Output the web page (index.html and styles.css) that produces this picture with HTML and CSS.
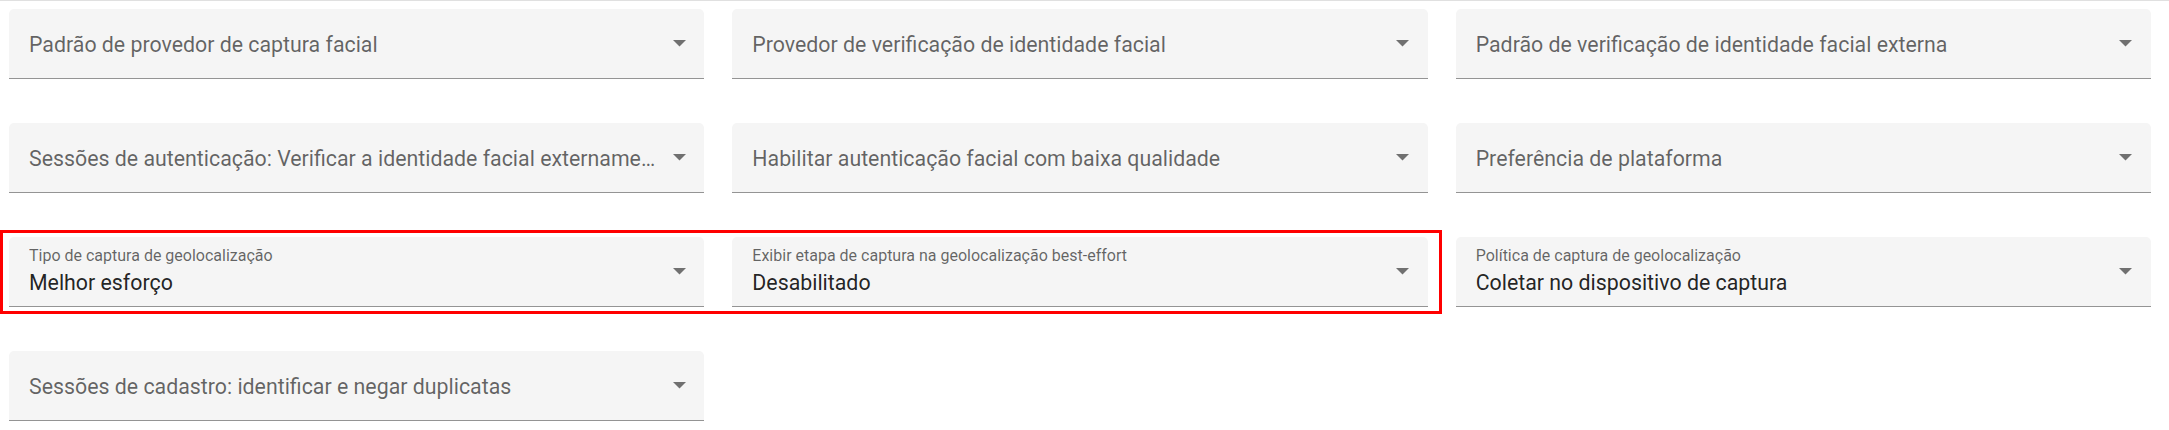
FILE: index.html
```html
<!DOCTYPE html>
<html lang="pt-BR">
<head>
<meta charset="utf-8">
<title>Configurações de captura facial</title>
<link rel="stylesheet" href="styles.css">
</head>
<body>
<div class="page">
  <div class="topline"></div>
  <div class="grid">
    <div class="field">
      <div class="field-text"><div class="placeholder">Padrão de provedor de captura facial</div></div>
      <div class="arrow"><svg width="13" height="7" viewBox="0 0 13 7"><path d="M0 0h13L6.5 6.5z"/></svg></div>
    </div>
    <div class="field">
      <div class="field-text"><div class="placeholder">Provedor de verificação de identidade facial</div></div>
      <div class="arrow"><svg width="13" height="7" viewBox="0 0 13 7"><path d="M0 0h13L6.5 6.5z"/></svg></div>
    </div>
    <div class="field">
      <div class="field-text"><div class="placeholder">Padrão de verificação de identidade facial externa</div></div>
      <div class="arrow"><svg width="13" height="7" viewBox="0 0 13 7"><path d="M0 0h13L6.5 6.5z"/></svg></div>
    </div>

    <div class="field">
      <div class="field-text"><div class="placeholder">Sessões de autenticação: Verificar a identidade facial externamente</div></div>
      <div class="arrow"><svg width="13" height="7" viewBox="0 0 13 7"><path d="M0 0h13L6.5 6.5z"/></svg></div>
    </div>
    <div class="field">
      <div class="field-text"><div class="placeholder">Habilitar autenticação facial com baixa qualidade</div></div>
      <div class="arrow"><svg width="13" height="7" viewBox="0 0 13 7"><path d="M0 0h13L6.5 6.5z"/></svg></div>
    </div>
    <div class="field">
      <div class="field-text"><div class="placeholder">Preferência de plataforma</div></div>
      <div class="arrow"><svg width="13" height="7" viewBox="0 0 13 7"><path d="M0 0h13L6.5 6.5z"/></svg></div>
    </div>

    <div class="field">
      <div class="field-text">
        <div class="label">Tipo de captura de geolocalização</div>
        <div class="value">Melhor esforço</div>
      </div>
      <div class="arrow"><svg width="13" height="7" viewBox="0 0 13 7"><path d="M0 0h13L6.5 6.5z"/></svg></div>
    </div>
    <div class="field">
      <div class="field-text">
        <div class="label">Exibir etapa de captura na geolocalização best-effort</div>
        <div class="value">Desabilitado</div>
      </div>
      <div class="arrow"><svg width="13" height="7" viewBox="0 0 13 7"><path d="M0 0h13L6.5 6.5z"/></svg></div>
    </div>
    <div class="field">
      <div class="field-text">
        <div class="label">Política de captura de geolocalização</div>
        <div class="value">Coletar no dispositivo de captura</div>
      </div>
      <div class="arrow"><svg width="13" height="7" viewBox="0 0 13 7"><path d="M0 0h13L6.5 6.5z"/></svg></div>
    </div>

    <div class="field">
      <div class="field-text"><div class="placeholder">Sessões de cadastro: identificar e negar duplicatas</div></div>
      <div class="arrow"><svg width="13" height="7" viewBox="0 0 13 7"><path d="M0 0h13L6.5 6.5z"/></svg></div>
    </div>
  </div>
  <div class="highlight"></div>
</div>
</body>
</html>
```
FILE: styles.css
```css
html, body {
  margin: 0;
  padding: 0;
  background: #ffffff;
}

body {
  font-family: Roboto, "Liberation Sans", Arial, sans-serif;
  -webkit-font-smoothing: antialiased;
}

.page {
  position: relative;
  height: 430px;
  overflow: hidden;
}

.topline {
  height: 1px;
  background: #e0e0e0;
}

.grid {
  display: grid;
  grid-template-columns: repeat(3, 1fr);
  column-gap: 28px;
  row-gap: 44px;
  padding: 8px 18px 0 9px;
}

.field {
  display: flex;
  align-items: flex-start;
  height: 69px;
  padding: 0 12px 0 20px;
  background: #f5f5f5;
  border-bottom: 1px solid #949494;
  border-radius: 5px 5px 0 0;
  min-width: 0;
}

.field-text {
  flex: 1;
  min-width: 0;
}

.placeholder {
  padding-top: 24px;
  font-size: 21.33px;
  line-height: 24px;
  color: rgba(0, 0, 0, 0.6);
  white-space: nowrap;
  overflow: hidden;
  text-overflow: ellipsis;
}

.label {
  padding-top: 11px;
  font-size: 16px;
  line-height: 16px;
  color: rgba(0, 0, 0, 0.6);
  white-space: nowrap;
  overflow: hidden;
  text-overflow: ellipsis;
}

.value {
  margin-top: 7px;
  font-size: 21.33px;
  line-height: 24px;
  color: rgba(0, 0, 0, 0.87);
  white-space: nowrap;
  overflow: hidden;
  text-overflow: ellipsis;
}

.arrow {
  width: 26px;
  margin-top: 31px;
  display: flex;
  justify-content: center;
  flex: none;
}

.arrow svg {
  display: block;
  fill: rgba(0, 0, 0, 0.54);
}

.highlight {
  position: absolute;
  left: 0;
  top: 230px;
  width: 1442px;
  height: 84px;
  box-sizing: border-box;
  border: 3px solid #ff0000;
  pointer-events: none;
}
```
